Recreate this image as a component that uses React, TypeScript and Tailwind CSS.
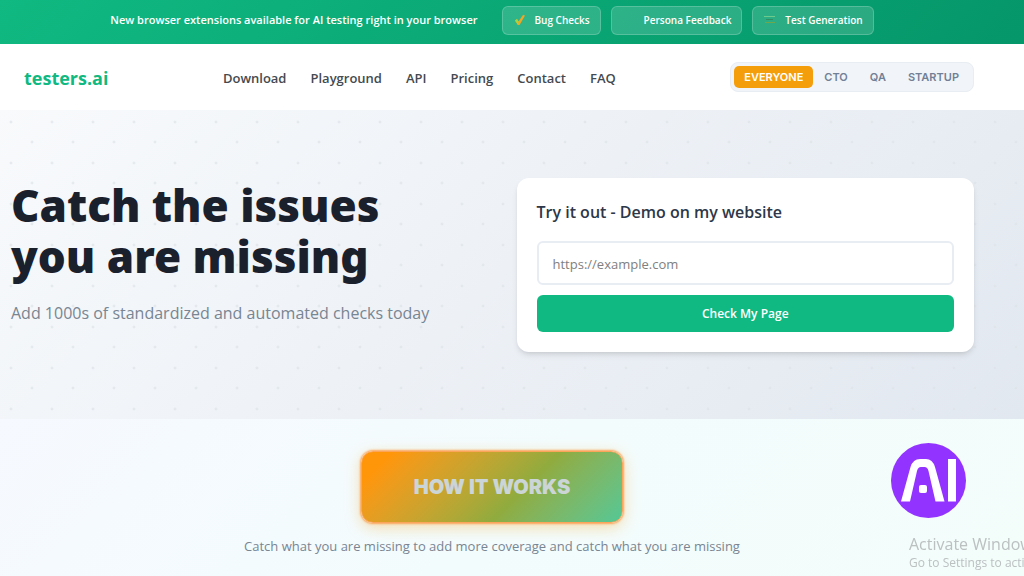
import { useState } from "react";

type Extension = {
  label: string;
  icon: "check" | "none" | "lines";
};

const extensions: Extension[] = [
  { label: "Bug Checks", icon: "check" },
  { label: "Persona Feedback", icon: "none" },
  { label: "Test Generation", icon: "lines" },
];

const links = ["Download", "Playground", "API", "Pricing", "Contact", "FAQ"];

const audiences = ["EVERYONE", "CTO", "QA", "STARTUP"];

function ExtensionIcon({ icon }: { icon: Extension["icon"] }) {
  return (
    <svg viewBox="0 0 14 14" className="size-3.5" aria-hidden="true">
      {icon === "check" && (
        <>
          <path d="M2 7.5 4 6l1.5 2.5L10 2l2 .5L6.5 12H5z" fill="#f5a524" />
          <path d="M2 7.5 4 6l1.5 2.5L5 12z" fill="#a3d53c" />
        </>
      )}
      {icon === "lines" && (
        <>
          <path d="M1 3.500h11" stroke="#6ccb8c" />
          <path d="M3 6.500h7" stroke="#2f8f62" />
          <path d="M2 9.500h10" stroke="#6fa84c" />
        </>
      )}
    </svg>
  );
}

function Banner() {
  return (
    <div className="flex h-11 items-center justify-center gap-6 bg-linear-135 from-[#10b981] to-[#059669] pr-10 pb-1 text-[11px] font-semibold text-white">
      <p>New browser extensions available for AI testing right in your browser</p>
      <div className="flex gap-2.5 text-[10px]">
        {extensions.map(({ label, icon }) => (
          <button
            key={label}
            type="button"
            className="flex h-[29px] items-center gap-2 rounded-md border border-white/20 bg-white/15 px-2.5"
          >
            <ExtensionIcon icon={icon} />
            {label}
          </button>
        ))}
      </div>
    </div>
  );
}

function Header() {
  const [audience, setAudience] = useState("EVERYONE");

  return (
    <header className="flex h-[66px] items-center justify-between bg-white pr-[50px] pl-6">
      <a href="#" className="pt-0.5 text-lg font-bold text-[#10b981]">
        testers.ai
      </a>
      <nav className="flex gap-6 pt-1 text-[13px] font-semibold text-[#444a4f]">
        {links.map((link) => (
          <a key={link} href="#">
            {link}
          </a>
        ))}
      </nav>
      <div className="flex rounded-lg border border-[#e8edf3] bg-[#f1f5f9] p-[3px] font-['Inter',sans-serif] text-[11px] font-semibold">
        {audiences.map((item) => (
          <button
            key={item}
            type="button"
            onClick={() => setAudience(item)}
            className={
              item === audience
                ? "h-[22px] rounded-[5px] bg-[#f59e0b] px-2.5 text-white"
                : "h-[22px] rounded-[5px] px-[11px] text-[#718096]"
            }
          >
            {item}
          </button>
        ))}
      </div>
    </header>
  );
}

function Hero() {
  return (
    <section className="bg-linear-135 from-[#f8fafc] to-[#e2e8f0]">
      <div className="grid grid-cols-2 items-start gap-12 bg-[radial-gradient(circle_at_11px_12px,#dde3e8_0px,transparent_2px),radial-gradient(circle_at_32px_32px,#dde3e8_0px,transparent_2px)] bg-size-[41px_41px] pt-[68px] pr-[50px] pb-[67px] pl-[11px]">
        <div className="pt-0.5">
          <h1 className="font-['Noto_Sans','Open_Sans',sans-serif] text-[44px] leading-[51px] font-black whitespace-nowrap text-[#1a202c]">
            Catch the issues
            <br />
            you are missing
          </h1>
          <p className="mt-[19px] text-base whitespace-nowrap text-[#788592]">
            Add 1000s of standardized and automated checks today
          </p>
        </div>
        <form
          className="rounded-xl bg-white p-5 shadow-md"
          onSubmit={(e) => e.preventDefault()}
        >
          <label
            htmlFor="site"
            className="block text-base leading-7 font-semibold text-[#2d3748]"
          >
            Try it out - Demo on my website
          </label>
          <input
            id="site"
            type="url"
            placeholder="https://example.com"
            className="mt-[15px] block h-11 w-full rounded-md border-2 border-[#e8ecf3] bg-white px-3.5 pt-0.5 text-[13px] placeholder:text-[#808080]"
          />
          <button
            type="submit"
            className="mt-2.5 h-[37px] w-full rounded-md bg-[#10b981] text-xs font-semibold text-white"
          >
            Check My Page
          </button>
        </form>
      </div>
    </section>
  );
}

function HowItWorks() {
  return (
    <section className="flex flex-1 flex-col items-center bg-linear-135 from-[#f6f9ff] via-[#f3fcfd] to-[#f3fdfa] pt-8 pr-10 pb-5">
      <button
        type="button"
        className="h-[72px] rounded-xl border border-[#fba55a] bg-linear-135 from-[#ff960a] from-10% via-[#90ab3e] via-60% to-[#50c896] bg-origin-border px-[52px] font-['Inter',sans-serif] text-xl font-black text-[#cbd5d8] shadow-[0_0_2px_1px_#fba55a,0_4px_16px_#f59e0b59]"
      >
        HOW IT WORKS
      </button>
      <p className="mt-3.5 text-[13px] text-[#788592]">
        Catch what you are missing to add more coverage and catch what you are missing
      </p>
    </section>
  );
}

function AssistantButton() {
  return (
    <button
      type="button"
      aria-label="AI"
      className="fixed right-[58px] bottom-[58px] size-[75px] rounded-full bg-[#9333ff]"
    >
      <svg viewBox="0 0 75 75" className="size-full" fill="#fff" aria-hidden="true">
        <path d="M10 58.500 19.500 24Q22 16 29 16H35Q41.500 16 44 24L53.500 58.500H44.500L37.500 28Q36.500 24 33.500 24H30Q27 24 26 28L19 58.500Z" />
        <rect x="28" y="42" width="8" height="8" rx="2" />
        <rect x="57" y="16" width="8" height="42.500" />
      </svg>
    </button>
  );
}

function ActivationNotice() {
  return (
    <div className="pointer-events-none fixed bottom-[5px] left-[909px] whitespace-nowrap text-[#bbc0c1]">
      <p className="text-base leading-5">Activate Windows</p>
      <p className="text-xs leading-[17px]">Go to Settings to activate Windows.</p>
    </div>
  );
}

export default function App() {
  return (
    <div className="flex min-h-screen flex-col overflow-hidden font-['Open_Sans','Noto_Sans',sans-serif]">
      <Banner />
      <Header />
      <Hero />
      <HowItWorks />
      <AssistantButton />
      <ActivationNotice />
    </div>
  );
}
